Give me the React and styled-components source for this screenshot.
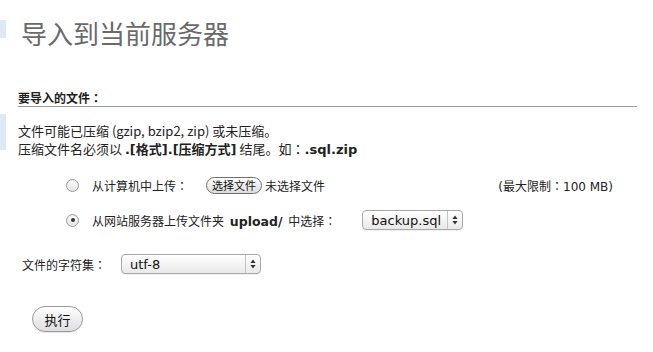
import styled, { createGlobalStyle } from "styled-components";

const GlobalStyle = createGlobalStyle`
  html, body {
    margin: 0;
    padding: 0;
    background: #ffffff;
  }
  body {
    font-family: "DejaVu Sans", "Noto Sans CJK SC", sans-serif;
    color: #222222;
  }
`;

const cjk = `"Noto Sans CJK SC", "DejaVu Sans", sans-serif`;

const Page = styled.div`
  display: flex;
  width: 653px;
  height: 352px;
  overflow: hidden;
`;

/* the cut-off edge of the side menu */
const Aside = styled.div`
  width: 6px;
  flex-shrink: 0;
  display: flex;
  flex-direction: column;
`;

const AsideTab = styled.div`
  background: #dfe9f6;
  height: ${(p) => p.$h}px;
  margin-top: ${(p) => p.$top}px;
`;

const Main = styled.div`
  flex: 1;
  padding: 0 16px 0 12px;
`;

const Title = styled.h2`
  margin: 17px 0 0 3px;
  font-family: ${cjk};
  font-weight: 400;
  font-size: 26px;
  line-height: 32px;
  color: #6a6a6a;
`;

const SectionHead = styled.h3`
  margin: 41px 0 0;
  font-family: ${cjk};
  font-size: 12px;
  font-weight: 700;
  line-height: 16px;
  color: #1e1e1e;
  border-bottom: 1px solid #9a9a9a;
`;

const Desc = styled.p`
  margin: 15px 0 0;
  font-family: ${cjk};
  font-size: 13px;
  line-height: 18px;
  color: #222;
  b {
    font-family: "DejaVu Sans", "Noto Sans CJK SC", sans-serif;
    font-size: 13px;
    font-weight: 700;
  }
`;

/* centred full-width colon, as in the reference */
const Colon = styled.span`
  font-family: "Noto Sans CJK JP", sans-serif;
`;

const Row = styled.div`
  display: flex;
  align-items: center;
  height: 20px;
  margin-top: ${(p) => p.$mt}px;
  padding-left: ${(p) => p.$pl || 0}px;
  padding-right: 24px;
  font-size: 12px;
  color: #222;
`;

const Radio = styled.span`
  width: 11px;
  height: 11px;
  border-radius: 50%;
  border: 1px solid #9c9c9c;
  background: linear-gradient(#fdfdfd, #e4e4e4);
  display: inline-flex;
  align-items: center;
  justify-content: center;
  margin-right: 13px;
  box-shadow: inset 0 1px 1px rgba(0, 0, 0, 0.08);
  &::after {
    content: "";
    width: 4px;
    height: 4px;
    border-radius: 50%;
    background: ${(p) => (p.$checked ? "#333" : "transparent")};
  }
`;

const Label = styled.span`
  white-space: nowrap;
  b {
    font-weight: 700;
    font-size: 12.5px;
    margin: 0 2px;
  }
`;

const FileButton = styled.button`
  margin-left: 18px;
  height: 17px;
  padding: 0 5px;
  border: 1px solid #6f6f6f;
  border-radius: 9px;
  background: linear-gradient(#ffffff, #dcdcdc);
  font-family: ${cjk};
  font-size: 11px;
  line-height: 15px;
  color: #111;
`;

const NoFile = styled.span`
  margin-left: 3px;
  font-family: ${cjk};
`;

const Limit = styled.span`
  margin-left: auto;
  white-space: nowrap;
`;

const Select = styled.div`
  display: flex;
  align-items: center;
  width: ${(p) => p.$w}px;
  height: 20px;
  box-sizing: border-box;
  margin-left: ${(p) => p.$ml}px;
  border: 1px solid #a8a8a8;
  border-radius: 4px;
  background: linear-gradient(#ffffff, #e9e9e9);
  box-shadow: 0 1px 1px rgba(0, 0, 0, 0.06);
  font-size: 13px;
  color: #111;
`;

const SelectText = styled.span`
  flex: 1;
  padding-left: 8px;
  white-space: nowrap;
`;

const SelectArrows = styled.span`
  width: 14px;
  height: 100%;
  border-left: 1px solid #c4c4c4;
  display: flex;
  align-items: center;
  justify-content: center;
`;

const CharsetLabel = styled.span`
  font-family: ${cjk};
  width: 99px;
`;

const SubmitButton = styled.button`
  display: block;
  margin: 32px 0 0 14px;
  width: 51px;
  height: 26px;
  border: 1px solid #9a9a9a;
  border-radius: 13px;
  background: linear-gradient(#ffffff, #dedede);
  box-shadow: 0 1px 1px rgba(0, 0, 0, 0.1);
  font-family: ${cjk};
  font-size: 13px;
  color: #111;
`;

const Arrows = () => (
  <svg width="6" height="10" viewBox="0 0 6 10">
    <path d="M3 0.5 L5.6 4 H0.4 Z M3 9.5 L5.6 6 H0.4 Z" fill="#333" />
  </svg>
);

const App = () => {
  return (
    <>
      <GlobalStyle />
      <Page>
        <Aside>
          <AsideTab $top={20} $h={18} />
          <AsideTab $top={76} $h={36} />
        </Aside>
        <Main>
          <Title>导入到当前服务器</Title>
          <SectionHead>要导入的文件<Colon>：</Colon></SectionHead>
          <Desc>
            文件可能已压缩 (gzip, bzip2, zip) 或未压缩。
            <br />
            压缩文件名必须以 <b>.[格式].[压缩方式]</b> 结尾。如<Colon>：</Colon><b>.sql.zip</b>
          </Desc>
          <Row $mt={16} $pl={48}>
            <Radio />
            <Label>从计算机中上传<Colon>：</Colon></Label>
            <FileButton>选择文件</FileButton>
            <NoFile>未选择文件</NoFile>
            <Limit>(最大限制<Colon>：</Colon>100 MB)</Limit>
          </Row>
          <Row $mt={15} $pl={48}>
            <Radio $checked />
            <Label>
              从网站服务器上传文件夹 <b>upload/</b> 中选择<Colon>：</Colon>
            </Label>
            <Select $w={101} $ml={26}>
              <SelectText>backup.sql</SelectText>
              <SelectArrows>
                <Arrows />
              </SelectArrows>
            </Select>
          </Row>
          <Row $mt={24} $pl={4}>
            <CharsetLabel>文件的字符集<Colon>：</Colon></CharsetLabel>
            <Select $w={140} $ml={0}>
              <SelectText>utf-8</SelectText>
              <SelectArrows>
                <Arrows />
              </SelectArrows>
            </Select>
          </Row>
          <SubmitButton>执行</SubmitButton>
        </Main>
      </Page>
    </>
  );
};

export default App;
